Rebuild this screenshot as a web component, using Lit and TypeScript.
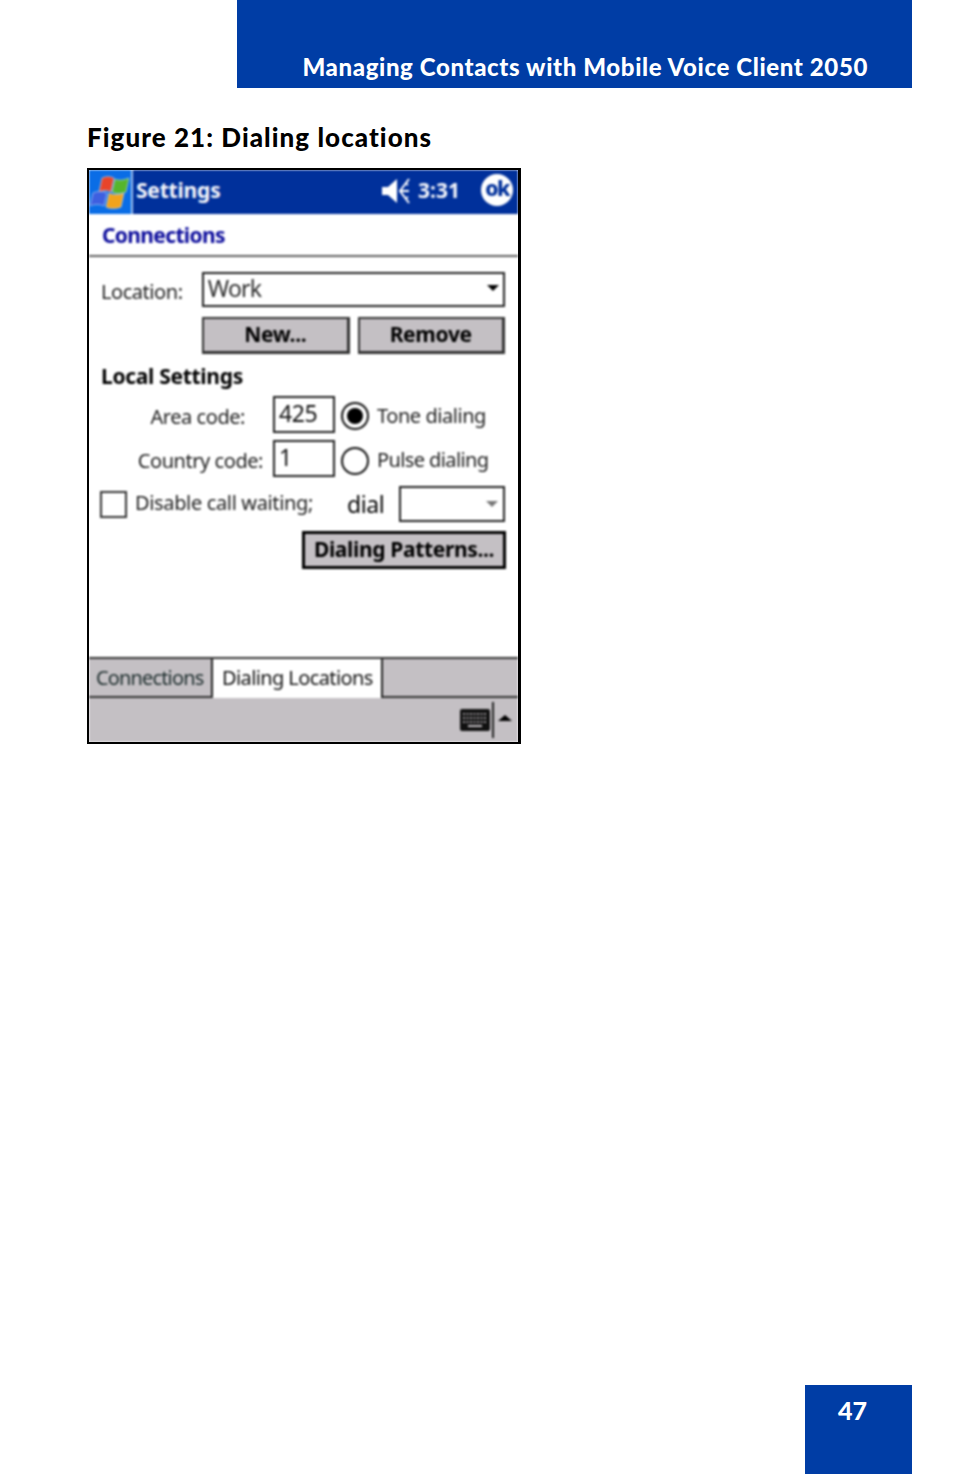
import { LitElement, html, css } from "lit";
import { customElement } from "lit/decorators.js";

@customElement("app-root")
export class AppRoot extends LitElement {
  static styles = css`
    :host { display: block; width: 954px; height: 1475px; background: #fff; font-family: "Lato", "Liberation Sans", sans-serif; }
    * { box-sizing: border-box; }
    .page { height: 1474px; display: flex; flex-direction: column; }
    .head { margin-left: 237px; width: 675px; height: 88px; background: #003da5; color: #fff; font-weight: 900; font-size: 24px; line-height: 30px; letter-spacing: 0.62px; display: flex; align-items: flex-end; justify-content: flex-end; padding: 0 44px 6px 0; white-space: nowrap; }
    .fig { margin: 21px 0 0 87px; height: 59px; font-size: 26px; line-height: 56px; font-weight: 900; letter-spacing: 1.05px; color: #000; white-space: nowrap; }
    .phone { margin-left: 87px; width: 434px; height: 576px; border: 2px solid #000; border-right-width: 3px; background: #fff; overflow: hidden; }
    .inner { height: 100%; display: flex; flex-direction: column; font-family: "Noto Sans", sans-serif; font-size: 20px; color: #222; filter: blur(0.8px); white-space: nowrap; }
    .title { height: 44px; background: #00309b; display: flex; align-items: center; color: #f4f6fb; font-weight: 700; flex: none; }
    .start { width: 44px; height: 44px; background: #0a6de6; border-right: 2px solid #9cc0ee; display: flex; align-items: center; justify-content: center; margin-right: 3px; }
    .ttl { font-size: 21px; letter-spacing: -0.2px; flex: 1; padding-bottom: 4px; }
    .snd { margin-bottom: 2px; }
    .time { font-size: 21px; margin: 0 21px 4px 7px; }
    .ok { width: 32px; height: 32px; border-radius: 50%; background: #fff; color: #00309b; font-size: 21px; font-weight: 800; line-height: 29px; text-align: center; letter-spacing: -1.5px; margin: 0 5px 4px 0; }
    .sub { height: 43px; flex: none; border-bottom: 2px solid #606060; padding-left: 13px; line-height: 43px; color: #0c0c9c; font-weight: 700; font-size: 21px; letter-spacing: -0.65px; }
    .form { flex: 1; padding: 15px 13px 0 12px; display: flex; flex-direction: column; color: #1c1c1c; letter-spacing: -0.45px; }
    .row { display: flex; align-items: center; }
    .box { border: 2px solid #222; background: #fff; display: flex; align-items: center; }
    .loc { height: 35px; }
    .lbl { width: 101px; padding-top: 4px; }
    .sel { width: 304px; height: 35px; padding: 0 4px 4px 4px; justify-content: space-between; font-size: 23px; color: #2c2c2c; letter-spacing: -0.75px; }
    .caret { width: 0; height: 0; border: 6px solid transparent; border-top: 6px solid #000; border-bottom: 0; }
    .caret.dim { border-top-color: #777; }
    .btns { margin: 10px 0 0 101px; gap: 8px; }
    .btn { background: #c4c0c4; border: 2px solid #333; border-right-width: 3px; border-bottom-width: 3px; height: 37px; color: #000; font-weight: 700; font-size: 21px; display: flex; align-items: center; justify-content: center; letter-spacing: -0.3px; padding-bottom: 2px; }
    .w148 { width: 148px; }
    .local { margin-top: 9px; height: 33px; line-height: 26px; font-weight: 700; color: #000; font-size: 21px; letter-spacing: -0.3px; }
    .f1 { height: 37px; }
    .f2 { height: 37px; margin-top: 7px; }
    .rl { width: 172px; text-align: right; padding: 3px 10px 0 0; flex: none; }
    .rl.a { padding-right: 28px; }
    .inp { width: 62px; height: 37px; padding: 0 0 4px 4px; font-size: 23px; color: #111; margin-right: 6px; flex: none; border-width: 2px; }
    .radio { width: 28px; height: 28px; border: 2px solid #111; border-radius: 50%; display: flex; align-items: center; justify-content: center; margin-right: 8px; flex: none; }
    .f1 .radio { margin-top: 3px; }
    .f2 .radio { margin-top: 4px; }
    .rt { padding-top: 2px; }
    .f2 .rt { letter-spacing: -0.6px; }
    .dot { width: 16px; height: 16px; border-radius: 50%; background: #000; }
    .f3 { height: 36px; margin: 9px 0 0 -1px; }
    .chk { width: 27px; height: 27px; border: 2px solid #333; margin-right: 8px; flex: none; }
    .dis { width: 212px; flex: none; padding-bottom: 4px; letter-spacing: -0.35px; }
    .dial { width: 52px; flex: none; font-size: 23px; letter-spacing: -0.4px; color: #000; }
    .sm { width: 106px; height: 36px; justify-content: flex-end; padding-right: 5px; }
    .pat { margin: 9px 0 0 201px; width: 204px; height: 38px; border: 3px solid #000; font-size: 21px; letter-spacing: -0.35px; }
    .tabs { height: 41px; flex: none; display: flex; background: #c4c0c4; border-top: 2px solid #333; border-bottom: 2px solid #333; letter-spacing: -0.85px; }
    .tab { height: 37px; line-height: 38px; padding-left: 7px; width: 124px; border-right: 2px solid #222; color: #1c2c2c; }
    .tab.on { width: 170px; background: #fff; height: 39px; padding-left: 9px; color: #111; letter-spacing: -0.6px; }
    .bar { height: 44px; flex: none; background: #c4c0c4; display: flex; align-items: center; justify-content: flex-end; padding-right: 6px; }
    .sep { width: 2px; height: 36px; background: #222; margin: 0 4px 0 2px; }
    .up { width: 0; height: 0; border: 7px solid transparent; border-bottom: 6px solid #000; border-top: 0; margin-bottom: 4px; }
    .foot { margin: auto 42px 0 auto; width: 107px; height: 89px; background: #003da5; color: #fff; font-weight: 900; font-size: 25px; line-height: 50px; padding-left: 33px; }
  `;

  render() {
    return html`<div class="page">
      <div class="head">Managing Contacts with Mobile Voice Client 2050</div>
      <div class="fig">Figure 21: Dialing locations</div>
      <div class="phone"><div class="inner">
        <div class="title">
          <div class="start">
            <svg width="40" height="34" viewBox="0 0 40 34">
              <path d="M12 3c4-2 8-2 12 0l-3 14c-4-2-8-2-12 0z" fill="#e8442a" stroke="#cfe0f6" stroke-width=".6"/>
              <path d="M25 4c4 2 9 1 14-1l-3 14c-5 2-10 2-14 0z" fill="#55b52c" stroke="#cfe0f6" stroke-width=".6"/>
              <path d="M3 18c4-2 10-2 14 0l-3 13c-4-2-10-2-14 0z" fill="#3d5fe0" stroke="#cfe0f6" stroke-width=".6"/>
              <path d="M19 18c4 2 10 2 15 0l-3 14c-5 2-11 2-15 0z" fill="#f2a31c" stroke="#cfe0f6" stroke-width=".6"/>
            </svg>
          </div>
          <div class="ttl">Settings</div>
          <svg class="snd" width="30" height="28" viewBox="0 0 30 28">
            <path d="M1 10h6l9-8v24l-9-8H1z" fill="#fff"/>
            <path d="M28 2l-9 12 9 12M20 14h8M24 6l3 2M24 22l3-2" fill="none" stroke="#fff" stroke-width="2"/>
          </svg>
          <div class="time">3:31</div>
          <div class="ok">ok</div>
        </div>
        <div class="sub">Connections</div>
        <div class="form">
          <div class="row loc">
            <div class="lbl">Location:</div>
            <div class="box sel">Work<span class="caret"></span></div>
          </div>
          <div class="row btns">
            <div class="btn w148">New...</div>
            <div class="btn w148">Remove</div>
          </div>
          <div class="local">Local Settings</div>
          <div class="row f1">
            <div class="rl a">Area code:</div>
            <div class="box inp">425</div>
            <div class="radio"><div class="dot"></div></div>
            <div class="rt">Tone dialing</div>
          </div>
          <div class="row f2">
            <div class="rl">Country code:</div>
            <div class="box inp">1</div>
            <div class="radio"></div>
            <div class="rt">Pulse dialing</div>
          </div>
          <div class="row f3">
            <div class="chk"></div>
            <div class="dis">Disable call waiting;</div>
            <div class="dial">dial</div>
            <div class="box sm"><span class="caret dim"></span></div>
          </div>
          <div class="btn pat">Dialing Patterns...</div>
        </div>
        <div class="tabs">
          <div class="tab">Connections</div>
          <div class="tab on">Dialing Locations</div>
        </div>
        <div class="bar">
          <svg width="30" height="22" viewBox="0 0 30 22">
            <rect width="30" height="22" rx="2" fill="#111"/>
            <path d="M3 5h24M3 9h24M3 13h24" stroke="#c4c0c4" stroke-width="1.6" stroke-dasharray="2 1.5"/>
            <path d="M8 17h14" stroke="#c4c0c4" stroke-width="2"/>
          </svg>
          <div class="sep"></div>
          <div class="up"></div>
        </div>
      </div></div>
      <div class="foot">47</div>
    </div>`;
  }
}
